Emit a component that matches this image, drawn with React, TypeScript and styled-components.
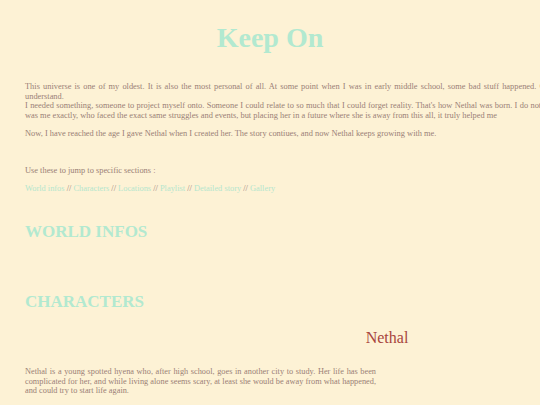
import React from 'react';
import styled, { createGlobalStyle } from 'styled-components';

const GlobalStyle = createGlobalStyle`
  html, body {
    margin: 0;
    padding: 0;
    background-color: #fdf2d5;
    overflow-x: hidden;
  }
  body {
    font-family: "Liberation Serif", "Times New Roman", serif;
    color: #9a7f76;
  }
`;

const Page = styled.div`
  width: 724px;
  padding: 22px 0 40px 25px;
`;

const Title = styled.h1`
  margin: 0 0 28px;
  width: 490px;
  text-align: center;
  font-size: 28px;
  font-weight: bold;
  color: #b2e9d0;
  line-height: 32px;
`;

const Text = styled.p<{ $justify?: boolean }>`
  margin: 0 0 8.5px;
  font-size: 8.4px;
  line-height: 9.7px;
  text-align: ${(p) => (p.$justify ? 'justify' : 'left')};
`;

const JumpBlock = styled.div`
  margin-top: 27px;
`;

const Links = styled.div`
  font-size: 8.4px;
  line-height: 9.7px;
  margin-top: 8px;
`;

const JumpLink = styled.a`
  color: #b4e6cd;
  text-decoration: none;
`;

const Sep = styled.span`
  color: #9a7f76;
`;

const SectionTitle = styled.h2`
  margin: 28px 0 0;
  font-size: 17px;
  line-height: 20px;
  font-weight: bold;
  color: #b2e9d0;
`;

const WorldBody = styled.div`
  height: 22px;
`;

const CharacterName = styled.h3`
  margin: 16px 0 0;
  text-align: center;
  font-size: 16px;
  line-height: 20px;
  font-weight: normal;
  color: #a8453d;
`;

const CharacterGrid = styled.div`
  display: grid;
  grid-template-columns: 351px 1fr;
  gap: 20px;
  margin-top: 19px;
`;

const CharacterText = styled.p`
  margin: 0;
  font-size: 8.3px;
  line-height: 9.7px;
  text-align: justify;
`;

const links = ['World infos', 'Characters', 'Locations', 'Playlist', 'Detailed story', 'Gallery'];

export default function App() {
  return (
    <>
      <GlobalStyle />
      <Page>
        <Title>Keep On</Title>
        <Text $justify>
          This universe is one of my oldest. It is also the most personal of all. At some point when I was in early middle school, some bad stuff happened. Certain things happened that I was much too young to fully
          understand.
          <br />
          I needed something, someone to project myself onto. Someone I could relate to so much that I could forget reality. That's how Nethal was born. I do not want to say that she is a perfect copy of me, or even that she
          was me exactly, who faced the exact same struggles and events, but placing her in a future where she is away from this all, it truly helped me
        </Text>
        <Text>
          Now, I have reached the age I gave Nethal when I created her. The story contiues, and now Nethal keeps growing with me.
        </Text>
        <JumpBlock>
          <Text>Use these to jump to specific sections :</Text>
          <Links>
            {links.map((l, i) => (
              <React.Fragment key={l}>
                {i > 0 && <Sep> // </Sep>}
                <JumpLink href={'#' + l.toLowerCase().replace(' ', '-')}>{l}</JumpLink>
              </React.Fragment>
            ))}
          </Links>
        </JumpBlock>
        <SectionTitle id="world-infos">WORLD INFOS</SectionTitle>
        <WorldBody />
        <SectionTitle id="characters">CHARACTERS</SectionTitle>
        <CharacterName>Nethal</CharacterName>
        <CharacterGrid>
          <CharacterText>
            Nethal is a young spotted hyena who, after high school, goes in another city to study. Her life has been complicated for her, and while living alone seems scary, at least she would be away from what happened, and could try to start life again.
          </CharacterText>
          <div />
        </CharacterGrid>
      </Page>
    </>
  );
}
